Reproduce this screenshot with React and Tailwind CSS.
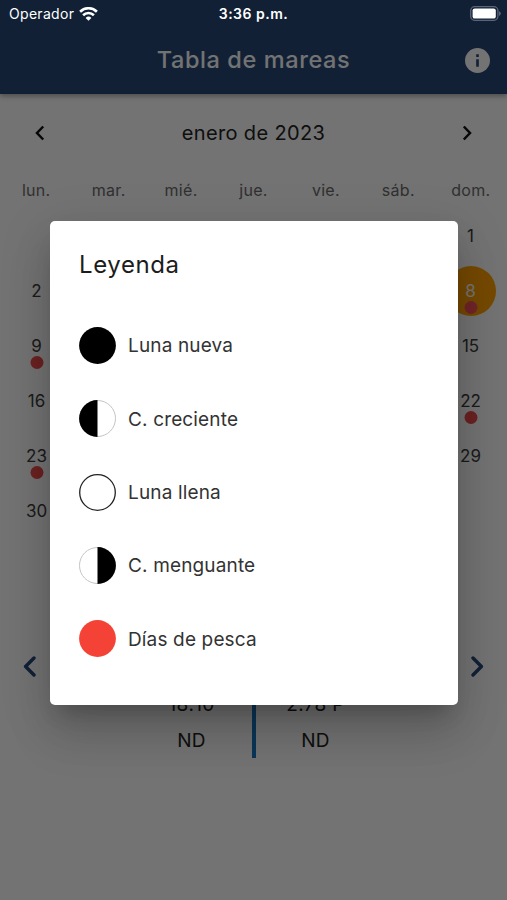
import React from 'react';

const weekDays = ['lun.', 'mar.', 'mié.', 'jue.', 'vie.', 'sáb.', 'dom.'];

// Monday and Sunday of each week, the days between sit behind the dialog
const weeks = [
  { first: null, last: 1 },
  { first: 2, last: 8 },
  { first: 9, last: 15 },
  { first: 16, last: 22 },
  { first: 23, last: 29 },
  { first: 30, last: null },
];
const fishingDays = [8, 9, 22, 23];
const selectedDay = 8;

const tides = [
  { time: '18:10', height: '2.78 P' },
  { time: 'ND', height: 'ND' },
];

const legend = [
  { id: 'new', label: 'Luna nueva' },
  { id: 'waxing', label: 'C. creciente' },
  { id: 'full', label: 'Luna llena' },
  { id: 'waning', label: 'C. menguante' },
  { id: 'fishing', label: 'Días de pesca' },
];

const WifiIcon = () => (
  <svg width="19" height="14" viewBox="0 0 19 14" fill="none" stroke="#fff" strokeWidth="2.6">
    <path d="M1.1 4.7a12 12 0 0 1 16.8 0" />
    <path d="M4.1 8.2a7.7 7.7 0 0 1 10.8 0" />
    <path d="M9.5 13.8 6.6 10.9a4.1 4.1 0 0 1 5.8 0z" fill="#fff" stroke="none" />
  </svg>
);

const BatteryIcon = () => (
  <svg width="31" height="15" viewBox="0 0 31 15">
    <rect x="0.7" y="0.7" width="27.2" height="13.6" rx="4" fill="none" stroke="#5b6577" strokeWidth="1.3" />
    <rect x="2.6" y="2.4" width="23.2" height="10.2" rx="2.2" fill="#fff" />
    <path d="M29 5.2c1.2.4 1.8 1.3 1.8 2.3s-.6 1.9-1.8 2.3z" fill="#5b6577" />
  </svg>
);

const InfoIcon = () => (
  <svg width="25" height="25" viewBox="0 0 25 25">
    <circle cx="12.5" cy="12.5" r="12.5" fill="#fafafa" />
    <path d="M11.2 11.3h2.6v7.4h-2.6zM11.2 6.3h2.6v2.6h-2.6z" fill="#254675" />
  </svg>
);

const MonthArrow = ({ flip }) => (
  <svg width="10" height="16" viewBox="0 0 10 16" fill="none" className={flip ? 'rotate-180' : ''}>
    <path d="M8.2 1.5 2 8l6.2 6.5" stroke="#111" strokeWidth="2.5" />
  </svg>
);

const DayArrow = ({ flip }) => (
  <svg width="13" height="21" viewBox="0 0 13 21" fill="none" className={flip ? 'rotate-180' : ''}>
    <path d="M11 2 2.6 10.5 11 19" stroke="#254675" strokeWidth="3.4" strokeLinecap="round" strokeLinejoin="round" />
  </svg>
);

const MoonIcon = ({ type }) => (
  <svg width="37" height="37" viewBox="0 0 37 37" className="shrink-0">
    {type === 'new' && <circle cx="18.5" cy="18.5" r="18.4" fill="#000" />}
    {type === 'full' && <circle cx="18.5" cy="18.5" r="17.8" fill="#fff" stroke="#222" strokeWidth="1.3" />}
    {type === 'fishing' && <circle cx="18.5" cy="18.5" r="18.4" fill="#f44336" />}
    {type === 'waxing' && (
      <>
        <circle cx="18.5" cy="18.5" r="18" fill="#fff" stroke="#c4c4c4" strokeWidth="1" />
        <path d="M18.5 .1a18.4 18.4 0 0 0 0 36.8z" fill="#000" />
      </>
    )}
    {type === 'waning' && (
      <>
        <circle cx="18.5" cy="18.5" r="18" fill="#fff" stroke="#c4c4c4" strokeWidth="1" />
        <path d="M18.5 .1a18.4 18.4 0 0 1 0 36.8z" fill="#000" />
      </>
    )}
  </svg>
);

const DayCell = ({ day }) => {
  const selected = day === selectedDay;
  return (
    <div className="relative flex h-[55px] w-[73px] items-center justify-center">
      {day && (
        <span
          className={`flex size-[50px] items-center justify-center rounded-full pt-0.5 text-[17px] ${
            selected ? 'bg-[#ffa000] text-[#fafafa]' : 'text-[#3c3c3c]'
          }`}
        >
          {day}
        </span>
      )}
      {fishingDays.includes(day) && (
        <span
          className={`absolute bottom-1 left-1/2 size-[13px] -translate-x-1/2 rounded-full ${
            selected ? 'bg-[#f4525a]' : 'bg-[#ea4a4a]'
          }`}
        />
      )}
    </div>
  );
};

const LegendDialog = () => (
  <div className="absolute inset-0 z-10 flex items-start justify-center bg-black/54 pt-[221px]">
    <div
      role="dialog"
      className="ml-px h-[484px] w-[408px] rounded-[5px] bg-white px-[29px] pt-[27px] shadow-[0_15px_20px_-9px_rgba(0,0,0,0.2),0_32px_46px_0px_rgba(0,0,0,0.13),0_12px_50px_6px_rgba(0,0,0,0.1)]"
    >
      <h2 className="text-[24px] leading-[34px] tracking-[0.6px] text-[#1c1c1c]">Leyenda</h2>
      <ul className="mt-[27px]">
        {legend.map((item) => (
          <li key={item.id} className="flex h-[73.3px] items-center gap-3">
            <MoonIcon type={item.id} />
            <span className="pt-0.5 text-[19px] tracking-[0.15px] text-[#333]">{item.label}</span>
          </li>
        ))}
      </ul>
    </div>
  </div>
);

const App = () => {
  return (
    <div className="relative flex h-[900px] w-[507px] flex-col overflow-hidden bg-[#fafafa] font-[Inter,sans-serif]">
      <header className="relative h-[94px] bg-[#254675] shadow-[0_2px_5px_rgba(0,0,0,0.35)]">
        {/* Status bar stays bright above the scrim */}
        <div className="relative z-20 grid h-[27px] grid-cols-3 items-center pr-[6px] pl-[9px] text-white">
          <div className="flex items-center gap-[5px] text-[14px] tracking-[0.3px]">
            <span>Operador</span>
            <WifiIcon />
          </div>
          <span className="pr-[3px] text-center text-[14px] font-semibold tracking-[0.5px]">3:36 p.m.</span>
          <div className="flex justify-end">
            <BatteryIcon />
          </div>
        </div>
        <div className="grid h-[66px] grid-cols-[60px_1fr_60px] items-center">
          <h1 className="col-start-2 text-center text-[23.5px] font-medium tracking-[0.6px] text-[#fafafa]">
            Tabla de mareas
          </h1>
          <button className="flex items-center justify-center" aria-label="Leyenda">
            <InfoIcon />
          </button>
        </div>
      </header>

      <div className="flex h-[78px] items-center justify-between px-[35px]">
        <MonthArrow />
        <span className="text-[20px] tracking-[0.35px] text-[#222]">enero de 2023</span>
        <MonthArrow flip />
      </div>

      <div className="grid h-[36px] grid-cols-7 items-center text-center text-[16px] tracking-[0.3px] text-[#6a6a6a]">
        {weekDays.map((d) => (
          <span key={d}>{d}</span>
        ))}
      </div>

      {weeks.map((week, i) => (
        <div key={i} className="flex justify-between">
          <DayCell day={week.first} />
          <DayCell day={week.last} />
        </div>
      ))}

      <div className="mt-[48px] flex h-[172px] items-start justify-between px-[23px]">
        <div className="pt-[70px]">
          <DayArrow />
        </div>
        <div className="flex h-full w-[244px] items-end text-center text-[19px] tracking-[0.3px] text-[#222]">
          <div className="flex-1">
            {tides.map((t, i) => (
              <div key={i} className="h-[35px] leading-9 first:h-9">{t.time}</div>
            ))}
          </div>
          <div className="h-full w-1 bg-[#1976c0]" />
          <div className="flex-1">
            {tides.map((t, i) => (
              <div key={i} className="h-[35px] leading-9 first:h-9">{t.height}</div>
            ))}
          </div>
        </div>
        <div className="pt-[70px]">
          <DayArrow flip />
        </div>
      </div>

      <LegendDialog />
    </div>
  );
};

export default App;
